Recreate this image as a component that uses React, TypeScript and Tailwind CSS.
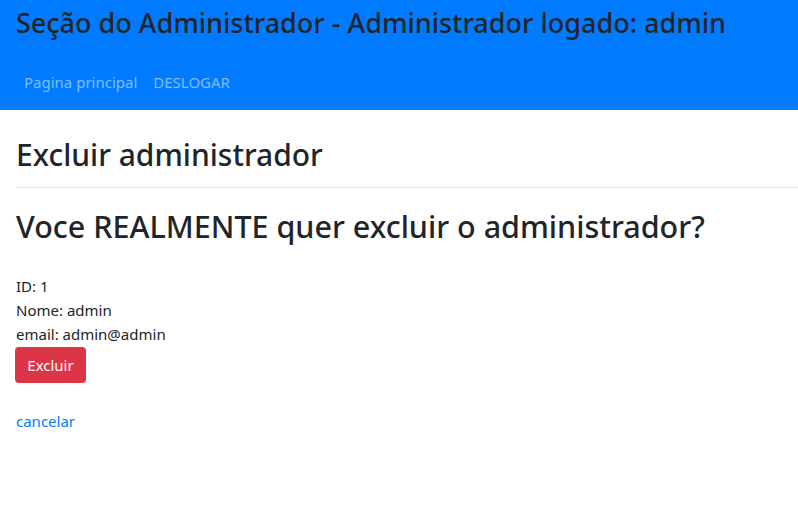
export default function App() {
  return (
    <div className="min-h-[521px] bg-white text-[#212529] font-['Noto_Sans',sans-serif]">
      <nav className="h-[110px] bg-[#007bff] px-4 pt-[3px]">
        <h1 className="text-[27px] leading-[40px] font-medium">
          Seção do Administrador - Administrador logado: admin
        </h1>
        <ul className="mt-[27px] flex gap-4 px-2 text-[15px] leading-6 text-[#80bdff]">
          <li>
            <a href="#">Pagina principal</a>
          </li>
          <li>
            <a href="#">DESLOGAR</a>
          </li>
        </ul>
      </nav>

      <main className="pl-4">
        <h2 className="mt-[26px] text-[30px] leading-[38px] font-medium">
          Excluir administrador
        </h2>
        <hr className="mt-[13px] border-t border-[#e5e5e5]" />
        <h2 className="mt-[18px] text-[30.5px] leading-[40px] font-medium">
          Voce REALMENTE quer excluir o administrador?
        </h2>

        <div className="mt-[28px] text-[15px] leading-6">
          <p>ID: 1</p>
          <p>Nome: admin</p>
          <p>email: admin@admin</p>
        </div>
        <button className="-ml-px mt-[1px] h-[36px] w-[71px] rounded bg-[#dc3545] text-[15px] text-white">
          Excluir
        </button>
        <p className="mt-[26px] text-[15px] leading-6">
          <a href="#" className="text-[#007bff]">
            cancelar
          </a>
        </p>
      </main>
    </div>
  );
}
